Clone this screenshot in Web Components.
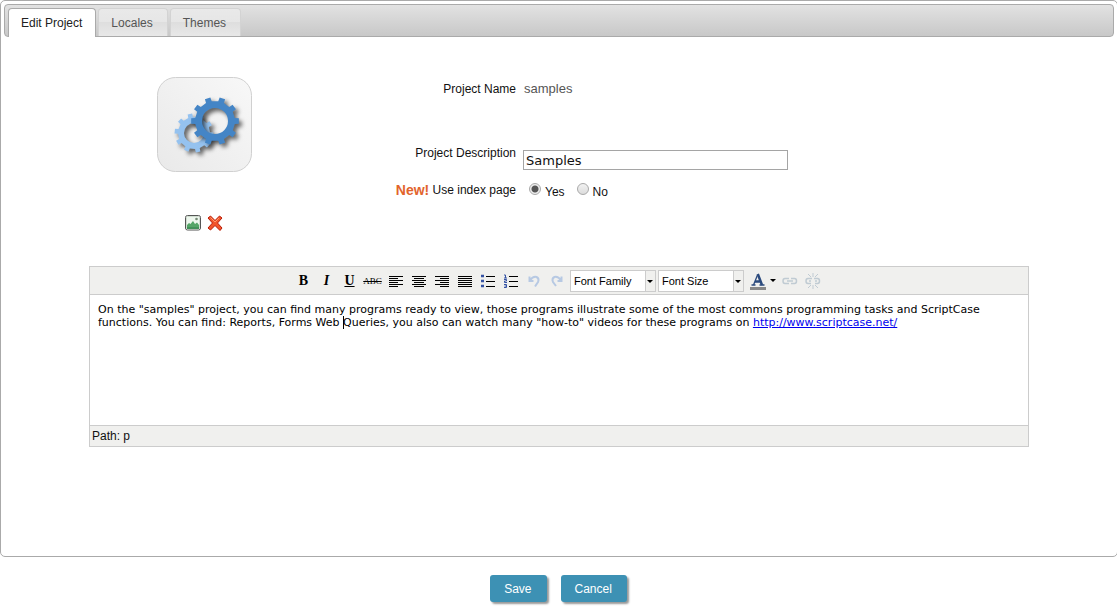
<!DOCTYPE html>
<html lang="en">
<head>
<meta charset="utf-8">
<title>Edit Project</title>
<style>
  body { margin: 0; background: #fff; overflow-x: hidden; font: 12px/16px "Liberation Sans", Arial, sans-serif; color: #111; }
</style>
</head>
<body>
<project-page></project-page>

<script>
const define = (name, html, setup) => {
  const template = document.createElement('template');
  template.innerHTML = html;
  customElements.define(name, class extends HTMLElement {
    constructor() {
      super();
      this.attachShadow({ mode: 'open' }).append(template.content.cloneNode(true));
    }
    connectedCallback() { if (setup) setup(this, this.shadowRoot); }
  });
};

/* Ring-shaped gear outline: teeth outside, round hole inside. */
const gearPath = (cx, cy, root, tip, hole, teeth, turn) => {
  const step = Math.PI * 2 / teeth, points = [];
  for (let i = 0; i < teeth; i++) {
    const mid = i * step + turn;
    for (const [offset, radius] of [[-.24, root], [-.19, tip], [.19, tip], [.24, root]]) {
      const angle = mid + offset * step;
      points.push((cx + radius * Math.cos(angle)).toFixed(2) + ' ' + (cy + radius * Math.sin(angle)).toFixed(2));
    }
  }
  return `M${points.join('L')}ZM${cx - hole} ${cy}a${hole} ${hole} 0 1 0 ${hole * 2} 0a${hole} ${hole} 0 1 0 ${-hole * 2} 0Z`;
};

define('tab-item', `
<style>
  :host { display: block; }
  button { font: inherit; height: 28px; padding: 0 13px 0 12px; border: 1px solid #d3d3d3; border-bottom: 0; border-radius: 4px 4px 0 0;
    background: linear-gradient(#e9e9e9, #e6e6e6 50%, #dedede 50%, #e8e8e8); color: #555; display: block; }
  :host(:not([active])) button { padding-right: 14px; }
  :host([active]) button { height: 29px; background: #fff; color: #212121; border-color: #aaa; }
</style>
<button type="button" role="tab"><slot></slot></button>`,
(host, root) => root.querySelector('button').setAttribute('aria-selected', host.hasAttribute('active')));

define('tab-bar', `
<style>
  :host { display: block; }
  div { display: flex; gap: 2px; align-items: flex-start; height: 28px; padding: 3px 3px 0; border: 1px solid #aaa; border-radius: 4px;
    background: linear-gradient(#e2e2e2, #c8c8c8); }
</style>
<div role="tablist"><slot></slot></div>`);

define('project-icon', `
<style>
  :host { display: flex; flex-direction: column; align-items: center; }
  .tools { display: flex; gap: 4px; margin-top: 42px; }
  button { padding: 0; border: 0; background: none; width: 18px; height: 18px; }
  svg { display: block; }
  .gears { filter: drop-shadow(3px 3px 2px rgba(0,0,0,.6)); }
</style>
<svg width="95" height="95" viewBox="0 0 95 95" role="img" aria-label="Project icon">
  <defs><linearGradient id="tile" x1="0" y1="1" x2="1" y2="0"><stop stop-color="#e9e9e9"/><stop offset="1" stop-color="#f8f8f8"/></linearGradient></defs>
  <rect x=".5" y=".5" width="94" height="94" rx="18" fill="url(#tile)" stroke="#d0d0d0"/>
  <g class="gears"><path id="small" fill="#95c2ef" fill-rule="evenodd"/></g>
  <g class="gears"><path id="large" fill="#4485c6" fill-rule="evenodd"/></g>
</svg>
<div class="tools">
  <button type="button" aria-label="Choose image"><svg width="18" height="18" viewBox="0 0 18 18">
    <rect x="1.5" y="1.5" width="15" height="14.5" rx="2" fill="#fff" stroke="#555"/>
    <rect x="2.5" y="2.5" width="13" height="12.5" rx="1" fill="#eef7ee" stroke="#b9cbb9" stroke-width=".6"/>
    <path d="M3 11l2-2 1.500 1L9 7l2 3 2-1.500 2 2.500v4H3Z" fill="#54a567"/><path d="M3 14h12" stroke="#3d8b54" stroke-width="1.500"/>
    <circle cx="12.500" cy="5" r="1.300" fill="#768b76"/></svg></button>
  <button type="button" aria-label="Remove image"><svg width="18" height="18" viewBox="0 0 18 18">
    <path d="M2 4L4.500 2 9 6.500 13.500 2 16 4 11.500 9 16 14l-2 2.500L9 11.500 4.500 16 2 14 6.500 9Z" fill="#f2562c" stroke="#b81c08" stroke-linejoin="round"/>
    <path d="M4.500 3.500L9 8l4-4" fill="none" stroke="#ff9a6c"/></svg></button>
</div>`,
(host, root) => {
  root.getElementById('small').setAttribute('d', gearPath(37, 56, 16, 19.5, 10, 10, 0.1));
  root.getElementById('large').setAttribute('d', gearPath(58, 44, 20, 24, 13, 10, 0));
});

define('project-form', `
<style>
  :host { display: grid; grid-template-columns: 197px minmax(0, 1fr); column-gap: 7px; align-content: start; }
  .name { text-align: right; line-height: 16px; }
  .line { display: contents; }
  .title .name, .title output { height: 61px; padding-top: 4px; }
  output { color: #555; font-size: 13px; line-height: 16px; padding-left: 1px; }
  .description .name { padding-top: 3px; }
  .description > div { padding-top: 8px; height: 29px; }
  #description { box-sizing: border-box; display: block; width: 265px; max-width: 100%; height: 20px; padding: 1px 2px; border: 1px solid #a5a5a5;
    font: 13px "DejaVu Sans", sans-serif; color: #111; outline: 0; }
  .index .name { padding-top: 3px; }
  strong { color: #e2642c; font-size: 14px; vertical-align: -1px; }
  .choices { display: flex; padding: 1px 0 0 6px; }
  .choices label { display: flex; margin-right: 12px; line-height: 24px; }
  input[type=radio] { appearance: none; box-sizing: border-box; width: 12px; height: 12px; margin: 3px 4px 0 0; border: 1px solid #a9a9a9; border-radius: 50%;
    background: linear-gradient(#f2f2f2, #dcdcdc); }
  input[type=radio]:checked { background: radial-gradient(circle, #555 0 3px, #eee 4px); }
</style>
<div class="line title"><div class="name">Project Name</div><output>samples</output></div>
<div class="line description"><label class="name" for="description">Project Description</label><div><input id="description" type="text" value="Samples"></div></div>
<div class="line index"><div class="name" id="index"><strong>New!</strong> Use index page</div>
  <div class="choices" role="radiogroup" aria-labelledby="index">
    <label><input type="radio" name="index" checked>Yes</label>
    <label><input type="radio" name="index">No</label>
  </div></div>`);

define('tool-button', `
<style>
  :host { display: block; }
  button { display: flex; align-items: center; justify-content: center; width: 23px; height: 22px; padding: 0; border: 0; background: none;
    font: bold 14px/16px "Liberation Serif", serif; color: #000; }
</style>
<button type="button"><slot></slot></button>`,
(host, root) => root.querySelector('button').setAttribute('aria-label', host.getAttribute('label')));

define('rich-editor', `
<style>
  :host { display: block; border: 1px solid #ccc; background: #fff; }
  .tools { display: flex; align-items: center; justify-content: center; height: 27px; padding-right: 2px; background: #f0f0ee; border-bottom: 1px solid #ccc; }
  svg { display: block; }
  s { font: 9px "Liberation Serif", serif; }
  .select { position: relative; margin-left: 2px; }
  .select::after { content: ""; position: absolute; right: 3px; top: 10px; border: 3px solid transparent; border-top-color: #000; border-bottom: 0; pointer-events: none; }
  select { appearance: none; display: block; box-sizing: border-box; width: 86px; height: 22px; padding: 0 0 0 3px; border: 1px solid #ccc; border-radius: 0;
    background: linear-gradient(90deg, #fff 74px, #ccc 74px 75px, #f0f0ee 75px); font: 11px "Liberation Sans", Arial, sans-serif; color: #000; }
  .color { margin-left: 2px; }
  .more { margin: 0 -6px 0 -8px; }
  .text { min-height: 114px; padding: 8px; font: 11px/13px "DejaVu Sans", sans-serif; color: #000; outline: 0; }
  p { margin: 0; }
  a { color: #00e; }
  .caret { border-left: 1px solid #000; margin-right: -1px; }
  .status { height: 20px; line-height: 20px; padding-left: 2px; background: #f0f0ee; border-top: 1px solid #ccc; }
</style>
<div class="tools" role="toolbar">
  <tool-button label="Bold">B</tool-button>
  <tool-button label="Italic"><i>I</i></tool-button>
  <tool-button label="Underline"><u>U</u></tool-button>
  <tool-button label="Strikethrough"><s>ABC</s></tool-button>
  <tool-button label="Align left"><svg width="14" height="12"><path d="M0 1.500h14M0 3.500h9M0 5.500h14M0 7.500h9M0 9.500h14M0 11.500h9" stroke="#000"/></svg></tool-button>
  <tool-button label="Align center"><svg width="14" height="12"><path d="M0 1.500h14M2 3.500h10M0 5.500h14M2 7.500h10M0 9.500h14M2 11.500h10" stroke="#000"/></svg></tool-button>
  <tool-button label="Align right"><svg width="14" height="12"><path d="M0 1.500h14M5 3.500h9M0 5.500h14M5 7.500h9M0 9.500h14M5 11.500h9" stroke="#000"/></svg></tool-button>
  <tool-button label="Justify"><svg width="14" height="12"><path d="M0 1.500h14M0 3.500h14M0 5.500h14M0 7.500h14M0 9.500h14M0 11.500h14" stroke="#000"/></svg></tool-button>
  <tool-button label="Bulleted list"><svg width="14" height="14"><path d="M5 2.500h9M5 7.500h9M5 12.500h9" stroke="#000"/><path d="M0 2h3M0 7h3M0 12h3" stroke="#3553a4" stroke-width="2.500"/></svg></tool-button>
  <tool-button label="Numbered list"><svg width="14" height="14"><path d="M5 2.500h9M5 7.500h9M5 12.500h9" stroke="#000"/><path d="M0 1h1.500v3M0 4h3M0 5.500h2.500v1.500H.5v1.500h2.500M0 10.500h2.500v3H0M.5 12h2" fill="none" stroke="#3553a4"/></svg></tool-button>
  <tool-button label="Undo"><svg width="14" height="14"><path d="M2.500 2.500v4.500h4M3 6.500Q6 2 9.500 3q3 1.500 1.500 5l-3 4.500" fill="none" stroke="#b7c9e3" stroke-width="2"/></svg></tool-button>
  <tool-button label="Redo"><svg width="14" height="14"><path d="M11.500 2.500v4.500h-4M11 6.500Q8 2 4.500 3q-3 1.500-1.500 5l3 4" fill="none" stroke="#b7c9e3" stroke-width="2"/></svg></tool-button>
  <div class="select"><select aria-label="Font Family"><option>Font Family</option></select></div>
  <div class="select"><select aria-label="Font Size"><option>Font Size</option></select></div>
  <tool-button class="color" label="Text color"><svg width="16" height="18"><path d="M0 16.500h16" stroke="#888" stroke-width="3"/><path d="M1.500 13h4M9.500 13h5M3.500 13L7.500 3" fill="none" stroke="#2b4a7d" stroke-width="1.300"/><path d="M7.800 2l4.200 11M5 9.500h5" fill="none" stroke="#2b4a7d" stroke-width="2.500"/></svg></tool-button>
  <tool-button class="more" label="More colors"><svg width="6" height="3"><path d="M0 0h6L3 3Z"/></svg></tool-button>
  <tool-button label="Insert link"><svg width="16" height="8"><path d="M7 1.500H3q-2 0-2 2.500t2 2.500h4M9 1.500h3.500q2 0 2 2.500t-2 2.500H9M5 4h6" fill="none" stroke="#c0cbd3" stroke-width="1.500"/></svg></tool-button>
  <tool-button label="Remove link"><svg width="16" height="16"><path d="M7 5.500H3q-2 0-2 2.500t2 2.500h3M9 5.500h3.500q2 0 2 2.500t-2 2.500H10M4 8h2M10 8h2" fill="none" stroke="#c0cbd3" stroke-width="1.500"/><path d="M8 0v4M3 1l3 3M13 1l-3 3M8 12v4M3 15l3-3M13 15l-3-3" stroke="#c0cbd3"/></svg></tool-button>
</div>
<div class="text" contenteditable="true" role="textbox" aria-label="Project text" spellcheck="false"><p><span>On the "samples" project, you can find many programs ready to view, those programs illustrate some of the most commons programming tasks and ScriptCase</span> <span>functions. You can find: Reports, Forms Web </span><span class="caret"></span><span>Queries, you also can watch many "how-to" videos for these programs on </span><a href="http://www.scriptcase.net/">http://www.scriptcase.net/</a></p></div>
<div class="status">Path: p</div>`);

define('action-button', `
<style>
  :host { display: block; }
  button { display: block; height: 27px; padding: 0 15px 0 14px; border: 0; border-radius: 3px; background: #3d91b4; color: #fff;
    font: 12px "Liberation Sans", Arial, sans-serif; box-shadow: 2px 2px 2px #999; }
</style>
<button type="button"><slot></slot></button>`);

define('project-page', `
<style>
  :host { display: block; }
  main { box-sizing: border-box; min-height: 557px; margin-right: -1px; padding: 3px; border: 1px solid #aaa; border-radius: 5px; }
  .content { max-width: 940px; margin: 40px auto 0; }
  .summary { display: grid; grid-template-columns: 230px minmax(0, 1fr); margin-bottom: 34px; }
  footer { display: flex; justify-content: center; gap: 14px; padding: 18px 0 4px; }
</style>
<main>
  <tab-bar><tab-item active>Edit Project</tab-item><tab-item>Locales</tab-item><tab-item>Themes</tab-item></tab-bar>
  <div class="content">
    <div class="summary"><project-icon></project-icon><project-form></project-form></div>
    <rich-editor></rich-editor>
  </div>
</main>
<footer><action-button>Save</action-button><action-button>Cancel</action-button></footer>`);
</script>
</body>
</html>
